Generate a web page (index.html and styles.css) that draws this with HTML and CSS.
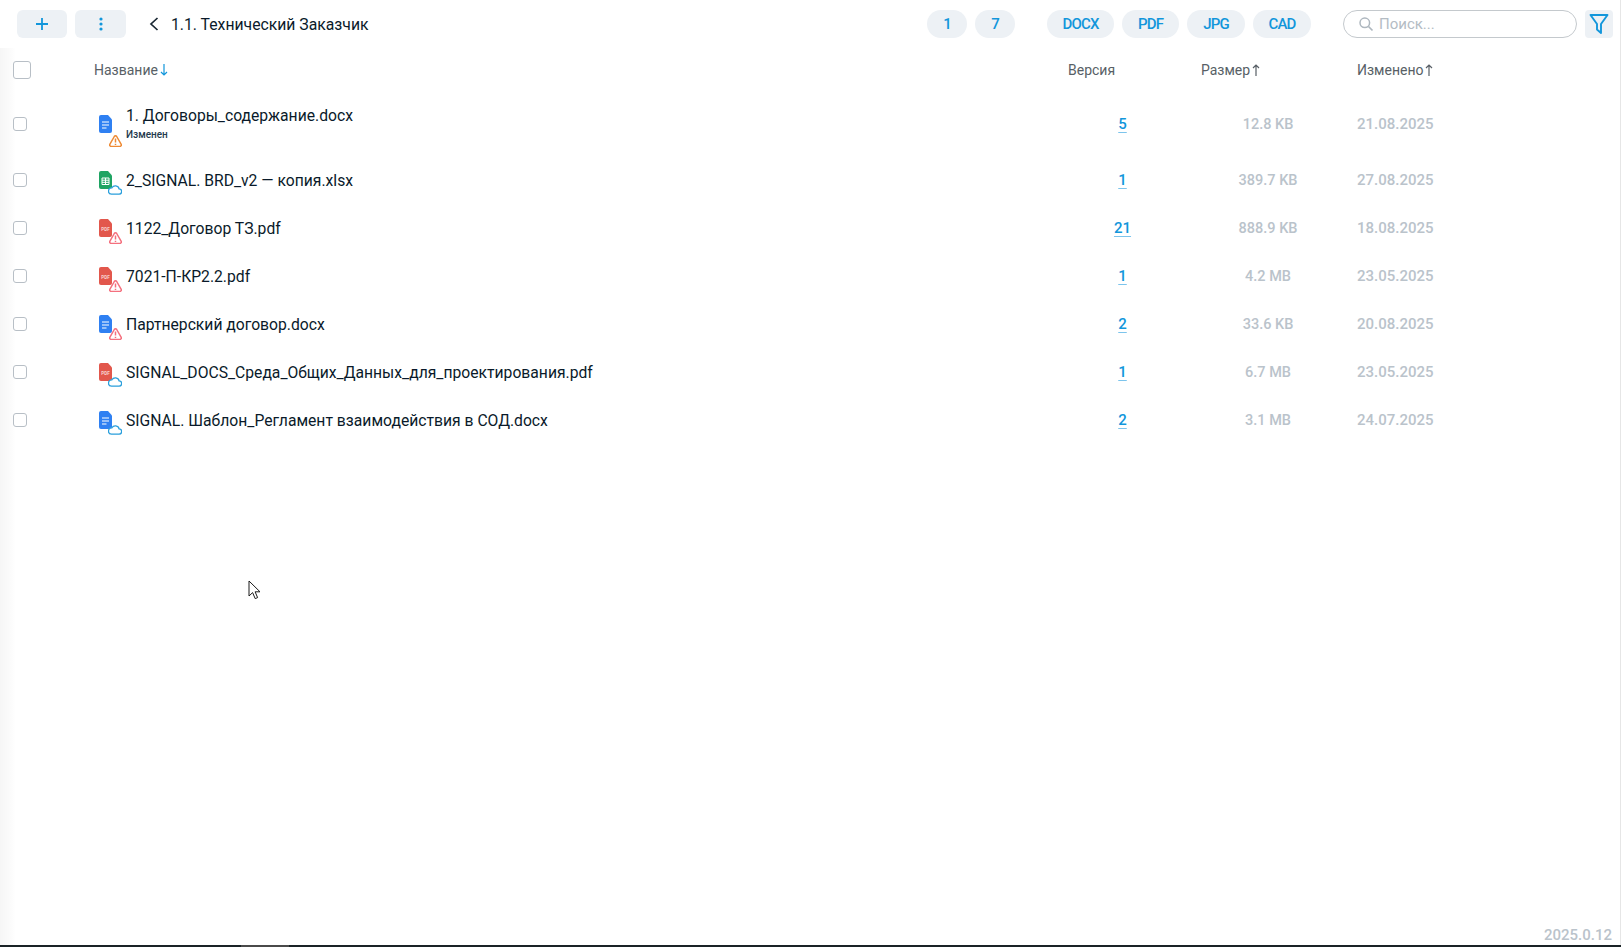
FILE: index.html
```html
<!DOCTYPE html>
<html lang="en">
<head>
    <meta charset="UTF-8">
    <meta name="viewport" content="width=device-width, initial-scale=1.0">
    <title>1.1. Технический Заказчик</title>
    <link rel="stylesheet" href="styles.css">
</head>
<body>
    <svg class="defs">
        <symbol id="doc-blue" viewBox="0 0 13 18">
            <path d="M2 0h7l4 4.500V16a2 2 0 0 1-2 2H2a2 2 0 0 1-2-2V2a2 2 0 0 1 2-2z" fill="#2f80f2"/>
            <path d="M3 7h7M3 10h7M3 13h4.500" stroke="#fff" stroke-width="1.200" fill="none"/>
        </symbol>
        <symbol id="doc-green" viewBox="0 0 13 18">
            <path d="M2 0h7l4 4.500V16a2 2 0 0 1-2 2H2a2 2 0 0 1-2-2V2a2 2 0 0 1 2-2z" fill="#1fa463"/>
            <path d="M3 7h7v6.500H3zM3 9.200h7M3 11.300h7M6.500 7v6.500" stroke="#fff" stroke-width="1" fill="none"/>
        </symbol>
        <symbol id="doc-red" viewBox="0 0 13 18">
            <path d="M2 0h7l4 4.500V16a2 2 0 0 1-2 2H2a2 2 0 0 1-2-2V2a2 2 0 0 1 2-2z" fill="#e2574c"/>
            <text x="6.500" y="11.500" text-anchor="middle" font-size="4.500" font-weight="700" font-family="Roboto, sans-serif" fill="#f8d5d2">PDF</text>
        </symbol>
        <symbol id="warn" viewBox="0 0 13 12">
            <path d="M5.300 1.500a1.400 1.400 0 0 1 2.400 0l4.500 7.900a1.400 1.400 0 0 1-1.200 2H2a1.400 1.400 0 0 1-1.200-2z" fill="#fff" stroke="currentColor" stroke-width="1.500" stroke-linejoin="round"/>
            <path d="M6.500 3.600v4M6.500 8.700v1.300" stroke="currentColor" stroke-width="1.500" fill="none"/>
        </symbol>
        <symbol id="cloud" viewBox="0 0 14 11">
            <path d="M3.500 10.200h7.300a2.700 2.700 0 0 0 .3-5.400A3.900 3.900 0 0 0 3.900 3.800 3.200 3.200 0 0 0 3.500 10.200z" fill="#fff" stroke="#2a9fdc" stroke-width="1.300"/>
        </symbol>
        <symbol id="arrow-down" viewBox="0 0 8 12">
            <path d="M4 0v11M1 8l3 3 3-3" stroke="currentColor" stroke-width="1.200" fill="none"/>
        </symbol>
        <symbol id="arrow-up" viewBox="0 0 8 12">
            <path d="M4 12V1M1 4l3-3 3 3" stroke="currentColor" stroke-width="1.200" fill="none"/>
        </symbol>
    </svg>

    <div class="app">
        <header class="toolbar">
            <button class="tool-btn tool-plus">
                <svg width="14" height="14" viewBox="0 0 14 14"><path d="M7 1v12M1 7h12" stroke="#1296db" stroke-width="1.800"/></svg>
            </button>
            <button class="tool-btn tool-more">
                <svg width="4" height="14" viewBox="0 0 4 14" fill="#1296db"><circle cx="2" cy="2" r="1.600"/><circle cx="2" cy="7" r="1.600"/><circle cx="2" cy="12" r="1.600"/></svg>
            </button>
            <div class="crumb">
                <svg width="10" height="14" viewBox="0 0 10 14"><path d="M8.500 1 2 7l6.500 6" stroke="#1a2733" stroke-width="1.700" fill="none"/></svg>
                <span>1.1. Технический Заказчик</span>
            </div>
            <div class="pills pills-num">
                <span class="pill pill-n">1</span>
                <span class="pill pill-n">7</span>
            </div>
            <div class="pills pills-type">
                <span class="pill pill-docx">DOCX</span>
                <span class="pill pill-pdf">PDF</span>
                <span class="pill pill-jpg">JPG</span>
                <span class="pill pill-cad">CAD</span>
            </div>
            <div class="search">
                <svg width="16" height="16" viewBox="0 0 16 16"><circle cx="6.800" cy="6.800" r="4.800" stroke="#aeb7bf" stroke-width="1.500" fill="none"/><path d="m10.500 10.500 4 4" stroke="#aeb7bf" stroke-width="1.700"/></svg>
                <span>Поиск...</span>
            </div>
            <button class="filter">
                <svg width="20" height="22" viewBox="0 0 20 22"><path d="M1.500 2h17l-6.500 9v9l-4-3.500V11z" stroke="#1296db" stroke-width="1.900" fill="none" stroke-linejoin="round"/></svg>
            </button>
        </header>

        <div class="grid grid-head">
            <span class="check check-lg"></span>
            <span class="hcell">Название<svg class="arrow arrow-on"><use href="#arrow-down"/></svg></span>
            <span class="hcell">Версия</span>
            <span class="hcell">Размер<svg class="arrow"><use href="#arrow-up"/></svg></span>
            <span class="hcell">Изменено<svg class="arrow"><use href="#arrow-up"/></svg></span>
        </div>

        <div class="grid row row-tall">
            <span class="check"></span>
            <div class="name">
                <span class="file-icon">
                    <svg class="sheet"><use href="#doc-blue"/></svg>
                    <svg class="badge badge-orange badge-low"><use href="#warn"/></svg>
                </span>
                <div class="name-text">
                    <div class="fname">1. Договоры_содержание.docx</div>
                    <div class="status">Изменен</div>
                </div>
            </div>
            <a class="ver">5</a>
            <span class="size">12.8 KB</span>
            <span class="date">21.08.2025</span>
        </div>

        <div class="grid row">
            <span class="check"></span>
            <div class="name">
                <span class="file-icon">
                    <svg class="sheet"><use href="#doc-green"/></svg>
                    <svg class="badge cloud"><use href="#cloud"/></svg>
                </span>
                <div class="fname">2_SIGNAL. BRD_v2 — копия.xlsx</div>
            </div>
            <a class="ver">1</a>
            <span class="size">389.7 KB</span>
            <span class="date">27.08.2025</span>
        </div>

        <div class="grid row">
            <span class="check"></span>
            <div class="name">
                <span class="file-icon">
                    <svg class="sheet"><use href="#doc-red"/></svg>
                    <svg class="badge badge-red"><use href="#warn"/></svg>
                </span>
                <div class="fname">1122_Договор ТЗ.pdf</div>
            </div>
            <a class="ver">21</a>
            <span class="size">888.9 KB</span>
            <span class="date">18.08.2025</span>
        </div>

        <div class="grid row">
            <span class="check"></span>
            <div class="name">
                <span class="file-icon">
                    <svg class="sheet"><use href="#doc-red"/></svg>
                    <svg class="badge badge-red"><use href="#warn"/></svg>
                </span>
                <div class="fname">7021-П-КР2.2.pdf</div>
            </div>
            <a class="ver">1</a>
            <span class="size">4.2 MB</span>
            <span class="date">23.05.2025</span>
        </div>

        <div class="grid row">
            <span class="check"></span>
            <div class="name">
                <span class="file-icon">
                    <svg class="sheet"><use href="#doc-blue"/></svg>
                    <svg class="badge badge-red"><use href="#warn"/></svg>
                </span>
                <div class="fname">Партнерский договор.docx</div>
            </div>
            <a class="ver">2</a>
            <span class="size">33.6 KB</span>
            <span class="date">20.08.2025</span>
        </div>

        <div class="grid row">
            <span class="check"></span>
            <div class="name">
                <span class="file-icon">
                    <svg class="sheet"><use href="#doc-red"/></svg>
                    <svg class="badge cloud"><use href="#cloud"/></svg>
                </span>
                <div class="fname">SIGNAL_DOCS_Среда_Общих_Данных_для_проектирования.pdf</div>
            </div>
            <a class="ver">1</a>
            <span class="size">6.7 MB</span>
            <span class="date">23.05.2025</span>
        </div>

        <div class="grid row">
            <span class="check"></span>
            <div class="name">
                <span class="file-icon">
                    <svg class="sheet"><use href="#doc-blue"/></svg>
                    <svg class="badge cloud"><use href="#cloud"/></svg>
                </span>
                <div class="fname">SIGNAL. Шаблон_Регламент взаимодействия в СОД.docx</div>
            </div>
            <a class="ver">2</a>
            <span class="size">3.1 MB</span>
            <span class="date">24.07.2025</span>
        </div>

        <div class="version">2025.0.12</div>
    </div>

    <svg class="cursor" width="14" height="21" viewBox="0 0 14 21">
        <path d="M1 1v15l3.600-3.400 2.600 6 2.400-1-2.500-5.800H12z" fill="#fff" stroke="#1a1a1a" stroke-width="1"/>
    </svg>

    <div class="taskbar"><span class="taskbar-item"></span></div>
</body>
</html>
```

FILE: styles.css
```css
* {
    box-sizing: border-box;
}
html, body {
    height: 100%;
}
body {
    margin: 0;
    background-color: #fff;
    color: #0a1a2a;
    overflow: hidden;
    font-family: Roboto, "Noto Sans", Arial, sans-serif;
    font-size: 15px;
}
.defs {
    display: none;
}
.app {
    height: 945px;
    display: flex;
    flex-direction: column;
    border-right: 1px solid #e6e6e6;
    background: linear-gradient(to right, #f6f6f6 0, #fbfbfb 10px, #fff 16px) 0 48px no-repeat;
}

/* toolbar */
.toolbar {
    height: 48px;
    flex: none;
    display: flex;
    align-items: flex-start;
    padding: 10px 7px 0 17px;
    background-color: #fff;
}
.tool-btn, .filter {
    border: 0;
    padding: 0;
    display: flex;
    align-items: center;
    justify-content: center;
    background-color: #edf1f5;
}
.tool-btn {
    height: 28px;
    border-radius: 6px;
}
.tool-plus {
    width: 50px;
    margin-right: 8px;
}
.tool-more {
    width: 51px;
    margin-right: 23px;
}
.crumb {
    width: 778px;
    height: 28px;
    display: flex;
    align-items: center;
    gap: 12px;
    font-size: 15.750px;
}
.pills {
    display: flex;
    gap: 8px;
}
.pills-num {
    margin-right: 32px;
}
.pills-type {
    margin-right: 32px;
}
.pill {
    height: 28px;
    border-radius: 14px;
    display: flex;
    align-items: center;
    justify-content: center;
    background-color: #edf1f5;
    color: #1296db;
    font-size: 15px;
    font-weight: 500;
    letter-spacing: -0.800px;
}
.pill-n { width: 40px; }
.pill-docx { width: 67px; }
.pill-pdf { width: 57px; }
.pill-jpg { width: 58px; }
.pill-cad { width: 58px; }
.search {
    width: 234px;
    height: 28px;
    border: 1px solid #c4c9cd;
    border-radius: 14px;
    display: flex;
    align-items: center;
    gap: 5px;
    padding-left: 14px;
    color: #b4bcc4;
    font-size: 15px;
}
.filter {
    width: 28px;
    height: 28px;
    margin-left: 8px;
    border-radius: 4px;
}

/* table */
.grid {
    display: grid;
    grid-template-columns: 81px 974px 133px 156px 1fr;
    align-items: center;
    padding-left: 13px;
}
.grid-head {
    height: 44px;
    flex: none;
}
.hcell {
    display: flex;
    align-items: center;
    color: #585f66;
    font-size: 14px;
}
.arrow {
    width: 8px;
    height: 12px;
    margin-left: 2px;
    color: #585f66;
}
.arrow-on {
    color: #1296db;
}
.check {
    display: block;
    width: 14px;
    height: 14px;
    border: 1px solid #b8bfc6;
    border-radius: 3px;
    background-color: #fff;
}
.check-lg {
    width: 18px;
    height: 18px;
}
.row {
    height: 48px;
    flex: none;
}
.row-tall {
    height: 64px;
}
.name {
    display: flex;
    align-items: center;
}
.file-icon {
    position: relative;
    width: 27px;
    height: 18px;
    margin-left: 5px;
    flex: none;
}
.sheet {
    display: block;
    width: 13px;
    height: 18px;
}
.badge {
    position: absolute;
    left: 10px;
    top: 13px;
    width: 13px;
    height: 12px;
}
.badge-red {
    color: #f4707e;
}
.badge-orange {
    color: #ee8a34;
}
.badge-low {
    top: 20px;
}
.cloud {
    left: 9px;
    top: 13px;
    width: 14px;
    height: 11px;
}
.fname {
    font-size: 15.700px;
    white-space: nowrap;
}
.name-text {
    margin-top: -1px;
}
.status {
    margin-top: 3px;
    color: #1f3a4d;
    font-size: 10px;
    font-weight: 500;
    line-height: 14px;
}
.ver {
    justify-self: center;
    margin-right: 24px;
    color: #1296db;
    font-size: 15px;
    font-weight: 500;
    text-decoration: underline #7cc4ec 1px;
    text-underline-offset: 3px;
}
.size, .date {
    color: #bac3cb;
    font-weight: 500;
}
.size {
    justify-self: center;
    margin-right: 22px;
    font-size: 14.500px;
}
.date {
    font-size: 15px;
}
.version {
    margin-top: auto;
    align-self: flex-end;
    padding-right: 8px;
    padding-bottom: 1px;
    color: #bac3cb;
    font-size: 15px;
    font-weight: 500;
}

/* overlays and window edge */
.cursor {
    position: absolute;
    left: 248px;
    top: 580px;
}
.taskbar {
    height: 2px;
    background-color: #1a2326;
    padding-left: 241px;
}
.taskbar-item {
    display: block;
    width: 48px;
    height: 2px;
    background-color: #4a4a4a;
}
```
